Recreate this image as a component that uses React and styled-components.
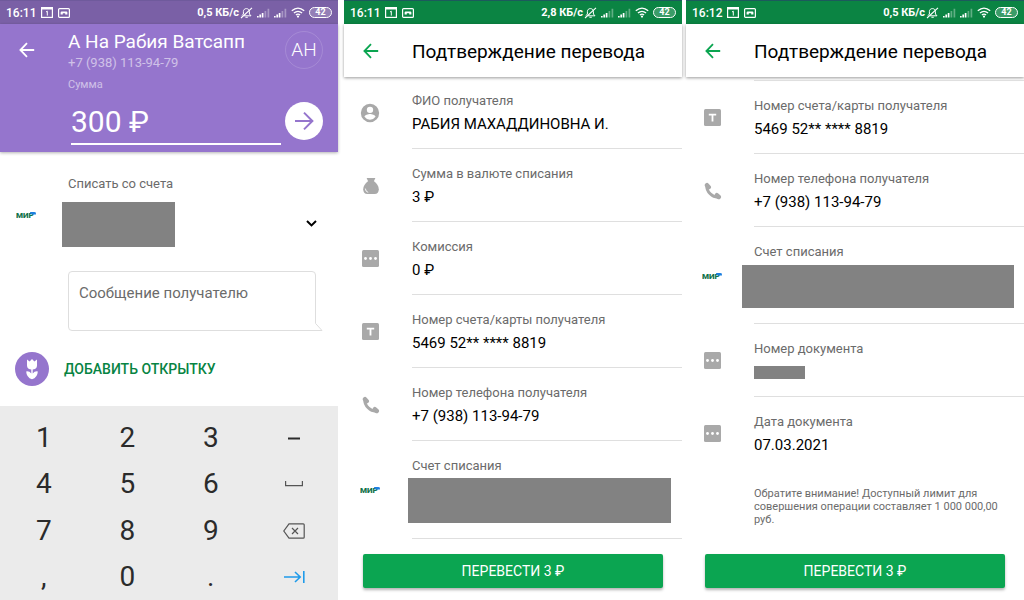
import React, { useState } from 'react';
import styled, { createGlobalStyle } from 'styled-components';

const GlobalStyle = createGlobalStyle`
:root {
  --purple: #9575cd;
  --purple-dark: #7a60a6;
  --green: #0ba551;
  --green-dark: #0b8443;
  --gray: #6b6b6b;
  --mask: #828282;
  --line: #dfdfdf;
}
* {
  box-sizing: border-box;
}
body {
  margin: 0;
  background: #fff;
  color: #000;
  font-family: Roboto, "Liberation Sans", sans-serif;
}
button, input, textarea {
  font-family: inherit;
  margin: 0;
  padding: 0;
  border: 0;
  background: none;
  color: inherit;
}
button {
  cursor: pointer;
}
svg {
  display: block;
}
`

const Screens = styled.div`
display: grid;
grid-template-columns: 1fr 6px 1fr 4px 1fr;
min-height: 100vh;
`

const Screen = styled.section`
grid-column: ${p => p.$column};
display: flex;
flex-direction: column;
min-width: 0;
background: #fff;
`

const Bar = styled.div`
display: flex;
align-items: center;
height: 24px;
padding: 0 6px;
border-top: 1px solid ${p => p.$edge};
background: ${p => p.$color};
color: #fff;
font-size: 12px;
font-weight: 500;

.left, .right {
  display: flex;
  align-items: center;
}
.left {
  gap: 5px;
}
.right {
  margin-left: auto;
}
.speed {
  font-size: 11px;
  font-weight: 700;
}
`

/* status bar */

const CalendarIcon = () => (
  <svg width="12" height="11" viewBox="0 0 12 11">
    <rect x="0.6" y="0.6" width="10.8" height="9.8" fill="none" stroke="#fff" strokeWidth="1.2" />
    <path d="M0 1.5h12" stroke="#fff" strokeWidth="2" />
    <path d="M5 5l1.3-.8V8.6" fill="none" stroke="#fff" strokeWidth="1" />
  </svg>
)

const CassetteIcon = () => (
  <svg width="12" height="10" viewBox="0 0 12 10">
    <rect x="0.6" y="0.6" width="10.8" height="8.8" rx="1" fill="none" stroke="#fff" strokeWidth="1.2" />
    <path d="M2.6 6.4V4.4Q2.6 3.4 3.6 3.4H8.4Q9.4 3.4 9.4 4.4V6.4H7.2V5.2H4.8V6.4z" fill="#fff" />
  </svg>
)

const MuteIcon = () => (
  <svg width="13" height="12" viewBox="0 0 13 12">
    <path d="M2 8.6L3.4 7V4.6C3.4 2.6 4.8 1.6 6.4 1.6S9.4 2.6 9.4 4.6V7L11 8.8H4" fill="none" stroke="#fff" strokeWidth="1" />
    <path d="M5.4 10.2h2.4M1 11L12 .8" fill="none" stroke="#fff" strokeWidth="1.1" />
  </svg>
)

const SignalIcon = () => (
  <svg width="13" height="10" viewBox="0 0 13 10">
    <path d="M0.8 9.4V8M3.2 9.4V6.6M5.6 9.4V5" stroke="#fff" strokeWidth="1.7" />
    <path d="M8.4 9.4V3M11.4 9.4V.8" stroke="#fff" strokeOpacity=".35" strokeWidth="1.7" />
  </svg>
)

const WifiIcon = () => (
  <svg width="14" height="11" viewBox="0 0 14 11">
    <path d="M.8 3.8Q7-1.6 13.2 3.8M2.9 6Q7 2.6 11.1 6M4.9 8Q7 6.4 9.1 8" fill="none" stroke="#fff" strokeWidth="1.3" />
    <circle cx="7" cy="9.6" r="1.1" fill="#fff" />
  </svg>
)

const SystemIcons = styled.span`
display: flex;
align-items: center;
gap: 4px;
margin-left: 1px;
`

const Battery = styled.span`
width: 23px;
height: 11px;
border: 1px solid #fff;
border-radius: 6px;
background: rgba(255, 255, 255, 0.2);
font-size: 9px;
font-weight: 700;
line-height: 9px;
text-align: center;
`

const StatusBar = ({ time, speed, color, edge }) => (
  <Bar $color={color} $edge={edge}>
    <div className="left">
      <span>{time}</span>
      <CalendarIcon />
      <CassetteIcon />
    </div>
    <div className="right">
      <span className="speed">{speed}</span>
      <SystemIcons>
        <MuteIcon />
        <SignalIcon />
        <SignalIcon />
        <WifiIcon />
        <Battery>42</Battery>
      </SystemIcons>
    </div>
  </Bar>
)

/* shared pieces */

const BackArrow = () => (
  <svg width="16" height="16" viewBox="0 0 16 16" fill="none" stroke="currentColor" strokeWidth="1.8">
    <path d="M15.2 8H1.6M8 1.2L1.4 8L8 14.8" />
  </svg>
)

const IconCell = styled.div`
display: flex;
flex: 0 0 68px;
align-items: center;
padding-left: ${p => p.$indent || 18}px;
color: #a9a9a9;
`

const MirLogo = () => (
  <svg width="21" height="8" viewBox="0 0 21 8" role="img" aria-label="МИР">
    <text x="0" y="7" fontSize="8" fontWeight="900" fill="#12724a">МИР</text>
    <path d="M14 1H18.4Q20.4 1 20 3.4H15.6Q14 3 14 1z" fill="#1d7fe0" />
  </svg>
)

const Mask = styled.div`
width: ${p => p.$width || 'auto'};
height: ${p => p.$height}px;
background: var(--mask);
`

/* transfer form */

const TransferHeader = styled.header`
display: flex;
height: 128px;
background: var(--purple);
color: #fff;
box-shadow: 0 1px 3px rgba(0, 0, 0, 0.3);

.back {
  flex: 0 0 68px;
  height: 52px;
  padding-left: 19px;
}
.info {
  flex: 1 1 auto;
  min-width: 0;
  padding-top: 6px;
}
h1 {
  margin: 0;
  font-size: 19px;
  font-weight: 400;
  line-height: 24px;
  white-space: nowrap;
}
.phone {
  font-size: 13px;
  line-height: 18px;
  opacity: 0.55;
}
label {
  display: block;
  margin-top: 5px;
  font-size: 11px;
  line-height: 16px;
  opacity: 0.55;
}
.amount {
  display: block;
  width: calc(100% - 3px);
  height: 46px;
  margin: 6px 0 0 3px;
  border-bottom: 2px solid #fff;
  font-size: 30px;
  font-weight: 400;
}
.side {
  display: flex;
  flex: 0 0 57px;
  flex-direction: column;
  align-items: flex-end;
  gap: 33px;
  padding: 7px 15px 0 0;
}
`

const Avatar = styled.div`
width: 38px;
height: 38px;
border: 1px solid rgba(255, 255, 255, 0.15);
border-radius: 50%;
font-size: 19px;
font-weight: 300;
line-height: 36px;
text-align: center;
`

const NextButton = styled.button`
display: grid;
place-items: center;
width: 38px;
height: 38px;
border-radius: 50%;
background: #fff;
color: var(--purple);
`

const Account = styled.div`
display: flex;
height: 111px;
padding-top: 23px;

${IconCell} {
  padding-bottom: 9px;
}
.body {
  flex: 1 1 auto;
}
.name {
  font-size: 13px;
  line-height: 18px;
  color: var(--gray);
}
.card {
  width: 113px;
  margin: 9px 0 0 -6px;
}
button {
  align-self: center;
  padding-top: 9px;
  margin-right: 21px;
}
`

const MessageBox = styled.div`
position: relative;
height: 60px;
margin: 8px 22px 0 68px;

textarea {
  display: block;
  width: 100%;
  height: 60px;
  padding: 11px 10px;
  border: 1px solid #dedede;
  border-radius: 4px;
  font-size: 15px;
  line-height: 20px;
  resize: none;
  outline: none;
}
textarea::placeholder {
  color: var(--gray);
}
.tail {
  position: absolute;
  right: -7px;
  bottom: 0;
}
`

const AddCard = styled.button`
display: flex;
align-items: center;
gap: 15px;
height: 34px;
margin: 21px 0 20px 15px;
color: #078443;
font-size: 14px;
font-weight: 500;
`

const Keyboard = styled.div`
display: grid;
flex: 1 1 auto;
grid-template-columns: repeat(4, 1fr);
grid-auto-rows: 1fr;
padding: 9px 2px 0;
background: #ebebeb;
color: #2b2b2b;

button {
  display: grid;
  place-items: center;
  font-size: 28px;
  line-height: 46px;
}
`

const Tulip = () => (
  <svg width="34" height="34" viewBox="0 0 34 34">
    <circle cx="17" cy="17" r="17" fill="#9575cd" />
    <path d="M12 7.6L14.6 9.6L17 7L19.4 9.6L22 7.6V13.4Q22 17.4 17 17.4T12 13.4z" fill="#fff" />
    <path d="M16.3 17H17.7V21.4Q19.6 19 22.8 19.4Q22.6 25.4 17 27.2Q11.4 25.4 11.2 19.4Q14.4 19 16.3 21.4z" fill="#fff" />
  </svg>
)

const SpaceIcon = () => (
  <svg width="18" height="6" viewBox="0 0 18 6" fill="none" stroke="#555" strokeWidth="1.2">
    <path d="M.6 0V4.6H17.4V0" />
  </svg>
)

const BackspaceIcon = () => (
  <svg width="22" height="16" viewBox="0 0 22 16" fill="none" stroke="#555" strokeWidth="1.2">
    <path d="M6 .8H20.2Q21.2 .8 21.2 1.8V14.2Q21.2 15.2 20.2 15.2H6L.8 8z" />
    <path d="M9 5L15 11M15 5L9 11" />
  </svg>
)

const TabIcon = () => (
  <svg width="21" height="12" viewBox="0 0 21 12" fill="none" stroke="#1f9bea" strokeWidth="1.6">
    <path d="M0 6H16M11 1L16.2 6L11 11M19.8 0V12" />
  </svg>
)

const MinusIcon = () => (
  <svg width="12" height="3" viewBox="0 0 12 3">
    <path d="M0 1.5H12" stroke="#2b2b2b" strokeWidth="2" />
  </svg>
)

const keys = [
  '1', '2', '3', { name: 'Минус', icon: <MinusIcon /> },
  '4', '5', '6', { name: 'Пробел', icon: <SpaceIcon /> },
  '7', '8', '9', { name: 'Стереть', icon: <BackspaceIcon /> },
  ',', '0', '.', { name: 'Далее', icon: <TabIcon /> },
]

const TransferForm = () => {
  const [amount, setAmount] = useState('300 ₽')
  const [message, setMessage] = useState('')

  return (
    <Screen $column={1}>
      <StatusBar time="16:11" speed="0,5 КБ/с" color="var(--purple-dark)" edge="#6f5a9c" />
      <TransferHeader>
        <button className="back" aria-label="Назад"><BackArrow /></button>
        <div className="info">
          <h1>А На Рабия Ватсапп</h1>
          <div className="phone">+7 (938) 113-94-79</div>
          <label htmlFor="amount">Сумма</label>
          <input id="amount" className="amount" value={amount} onChange={e => setAmount(e.target.value)} />
        </div>
        <div className="side">
          <Avatar>АН</Avatar>
          <NextButton aria-label="Продолжить">
            <svg width="20" height="20" viewBox="0 0 20 20" fill="none" stroke="currentColor" strokeWidth="2">
              <path d="M1 10H18M10 1.6L18.4 10L10 18.4" />
            </svg>
          </NextButton>
        </div>
      </TransferHeader>
      <Account>
        <IconCell $indent={16}><MirLogo /></IconCell>
        <div className="body">
          <div className="name">Списать со счета</div>
          <Mask className="card" $width="113px" $height={45} />
        </div>
        <button aria-label="Выбрать счет">
          <svg width="11" height="7" viewBox="0 0 11 7" fill="none" stroke="#000" strokeWidth="2">
            <path d="M1 1L5.5 5.4L10 1" />
          </svg>
        </button>
      </Account>
      <MessageBox>
        <textarea
          aria-label="Сообщение получателю"
          placeholder="Сообщение получателю"
          value={message}
          onChange={e => setMessage(e.target.value)}
        />
        <svg className="tail" width="12" height="9" viewBox="0 0 12 9">
          <path d="M0 0H5V1L11.4 8.5H0z" fill="#fff" />
          <path d="M4.5 0V1.4L11 8.5H0" fill="none" stroke="#dedede" />
        </svg>
      </MessageBox>
      <AddCard><Tulip />ДОБАВИТЬ ОТКРЫТКУ</AddCard>
      <Keyboard>
        {keys.map(key => (
          key.icon
            ? <button key={key.name} aria-label={key.name}>{key.icon}</button>
            : <button key={key}>{key}</button>
        ))}
      </Keyboard>
    </Screen>
  )
}

/* confirmation */

const ConfirmHeader = styled.header`
display: flex;
align-items: center;
height: 53px;
box-shadow: 0 1px 3px rgba(0, 0, 0, 0.4);

button {
  flex: 0 0 68px;
  padding-left: 19px;
  color: var(--green);
}
h1 {
  margin: 0;
  padding-top: 2px;
  font-size: 19px;
  font-weight: 400;
  line-height: 24px;
  white-space: nowrap;
}
`

const Details = styled.div`
display: flex;
flex-direction: column;
margin-top: -1px;
/* the scrolled list shows the divider of the row above */
${p => p.$scrolled && `
  &::before {
    content: '';
    height: 4px;
    margin-left: 68px;
    border-bottom: 1px solid var(--line);
  }
`}
`

const Row = styled.div`
display: flex;

.text {
  flex: 1 1 auto;
  min-width: 0;
  padding: 16px 0 12px;
  border-bottom: 1px solid ${p => p.$last ? 'transparent' : 'var(--line)'};
}
.label {
  font-size: 13px;
  line-height: 18px;
  color: var(--gray);
}
.value {
  display: flex;
  align-items: center;
  height: 24px;
  margin-top: 2px;
  font-size: 15px;
  line-height: 24px;
}
`

const AccountMask = styled(Mask)`
margin: ${p => p.$top}px ${p => p.$right}px 3px -${p => p.$bleed}px;
`

const Note = styled.p`
margin: 17px 16px 12px 68px;
font-size: 11px;
line-height: 13px;
color: var(--gray);
`

const SubmitButton = styled.button`
height: 34px;
margin: auto 19px 12px;
border-radius: 2px;
background: var(--green);
box-shadow: 0 2px 3px rgba(0, 0, 0, 0.3);
color: #fff;
font-size: 14px;
`

const PersonIcon = () => (
  <svg width="20" height="20" viewBox="0 0 24 24" fill="currentColor">
    <path d="M12 1a11 11 0 1 0 0 22 11 11 0 0 0 0-22zm0 3.4a3.8 3.8 0 1 1 0 7.6 3.8 3.8 0 0 1 0-7.6zM12 20a8 8 0 0 1-6.6-3.5c0-2.2 4.4-3.4 6.6-3.4s6.6 1.2 6.6 3.4A8 8 0 0 1 12 20z" />
  </svg>
)

const BagIcon = () => (
  <svg width="18" height="18" viewBox="0 0 18 18" fill="currentColor">
    <path d="M4.6 1H13.4L12 4H6z" />
    <path d="M6.2 4H11.8Q16.8 8 16.8 12.2Q16.8 17 12.6 17H5.4Q1.2 17 1.2 12.2Q1.2 8 6.2 4z" />
    <path d="M3.4 11.6Q3.4 14.6 6.2 15.4" fill="none" stroke="#fff" strokeWidth=".9" />
  </svg>
)

const DotsIcon = () => (
  <svg width="17" height="17" viewBox="0 0 17 17">
    <rect width="17" height="17" rx="1.5" fill="currentColor" />
    <g fill="#fff">
      <circle cx="3.5" cy="8.5" r="1.4" />
      <circle cx="8.5" cy="8.5" r="1.4" />
      <circle cx="13.5" cy="8.5" r="1.4" />
    </g>
  </svg>
)

const CardIcon = () => (
  <svg width="17" height="17" viewBox="0 0 17 17">
    <rect width="17" height="17" rx="1.5" fill="currentColor" />
    <path d="M4.8 5.6H12.2M8.5 5V12.4" stroke="#fff" strokeWidth="1.8" />
  </svg>
)

const PhoneIcon = () => (
  <svg width="18" height="18" viewBox="0 0 18 18" fill="none" stroke="currentColor" strokeLinecap="round">
    <path d="M2.8 3.6C2.4 9.6 8.4 15.6 14.4 15.2" strokeWidth="3" />
    <path d="M3 3.2L4.8 5.2M12.8 13.2L14.8 15" strokeWidth="4.4" />
  </svg>
)

const Detail = ({ icon, indent, label, last, children }) => (
  <Row $last={last}>
    <IconCell $indent={indent}>{icon}</IconCell>
    <div className="text">
      <div className="label">{label}</div>
      {children}
    </div>
  </Row>
)

const Confirm = ({ column, time, speed, scrolled, children }) => (
  <Screen $column={column}>
    <StatusBar time={time} speed={speed} color="var(--green-dark)" edge="#1c5a5c" />
    <ConfirmHeader>
      <button aria-label="Назад"><BackArrow /></button>
      <h1>Подтверждение перевода</h1>
    </ConfirmHeader>
    <Details $scrolled={scrolled}>{children}</Details>
    <SubmitButton>ПЕРЕВЕСТИ 3 ₽</SubmitButton>
  </Screen>
)

const App = () => {
  return (
    <Screens>
      <GlobalStyle />
      <TransferForm />
      <Confirm column={3} time="16:11" speed="2,8 КБ/с">
        <Detail icon={<PersonIcon />} indent={16} label="ФИО получателя">
          <div className="value">РАБИЯ МАХАДДИНОВНА И.</div>
        </Detail>
        <Detail icon={<BagIcon />} label="Сумма в валюте списания">
          <div className="value">3 ₽</div>
        </Detail>
        <Detail icon={<DotsIcon />} label="Комиссия">
          <div className="value">0 ₽</div>
        </Detail>
        <Detail icon={<CardIcon />} label="Номер счета/карты получателя">
          <div className="value">5469 52** **** 8819</div>
        </Detail>
        <Detail icon={<PhoneIcon />} label="Номер телефона получателя">
          <div className="value">+7 (938) 113-94-79</div>
        </Detail>
        <Detail icon={<MirLogo />} indent={16} label="Счет списания">
          <AccountMask $height={45} $top={3} $right={11} $bleed={4} />
        </Detail>
      </Confirm>
      <Confirm column={5} time="16:12" speed="0,5 КБ/с" scrolled>
        <Detail icon={<CardIcon />} label="Номер счета/карты получателя">
          <div className="value">5469 52** **** 8819</div>
        </Detail>
        <Detail icon={<PhoneIcon />} label="Номер телефона получателя">
          <div className="value">+7 (938) 113-94-79</div>
        </Detail>
        <Detail icon={<MirLogo />} indent={16} label="Счет списания">
          <AccountMask $height={43} $top={4} $right={10} $bleed={12} />
        </Detail>
        <Detail icon={<DotsIcon />} label="Номер документа">
          <div className="value"><Mask $width="51px" $height={13} /></div>
        </Detail>
        <Detail icon={<DotsIcon />} label="Дата документа" last>
          <div className="value">07.03.2021</div>
        </Detail>
        <Note>
          Обратите внимание! Доступный лимит для совершения операции составляет 1 000 000,00 руб.
        </Note>
      </Confirm>
    </Screens>
  )
}

export default App;
